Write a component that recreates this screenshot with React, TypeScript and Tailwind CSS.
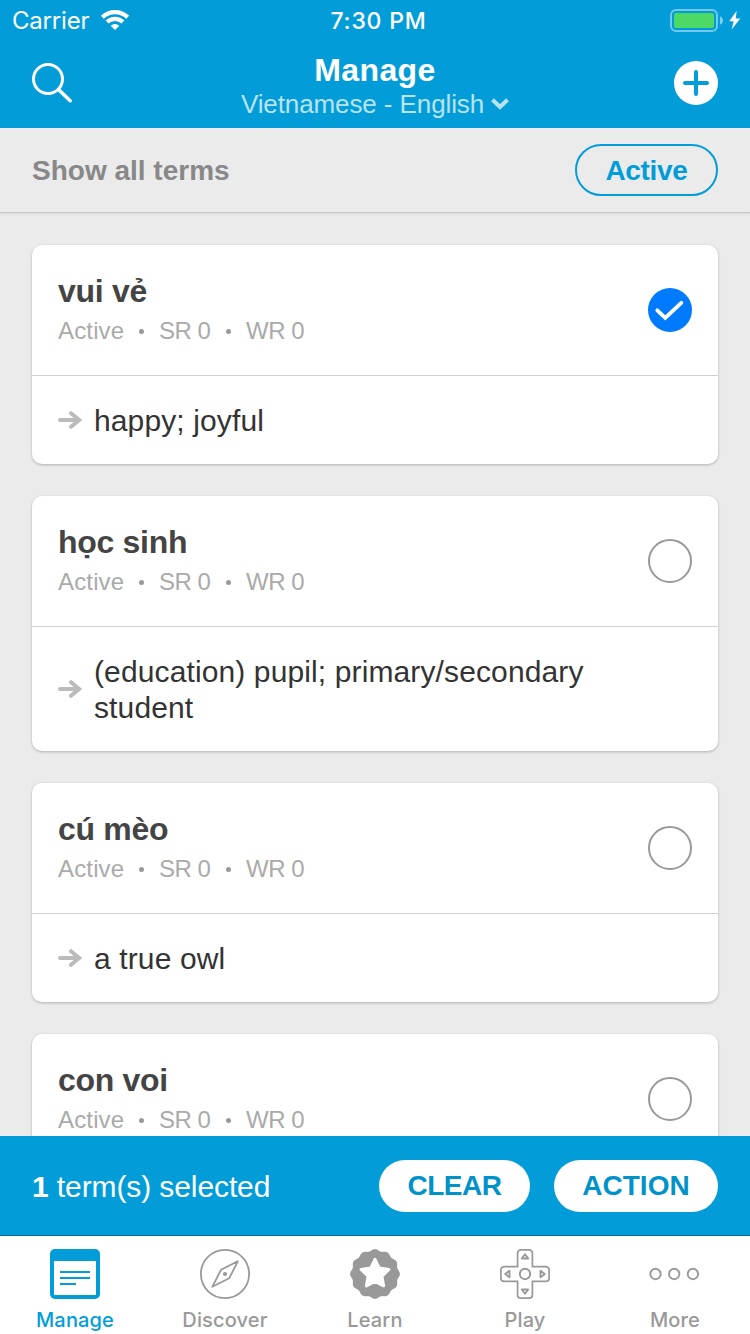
import React from "react";

type Term = { term: string; meaning?: string; selected?: boolean };

const TERMS: Term[] = [
  { term: "vui vẻ", meaning: "happy; joyful", selected: true },
  { term: "học sinh", meaning: "(education) pupil; primary/secondary student" },
  { term: "cú mèo", meaning: "a true owl" },
  { term: "con voi" },
];

function polar(count: number, radius: (i: number) => number): string {
  return Array.from({ length: count }, (_, i) => {
    const a = (i / count) * Math.PI * 2 - Math.PI / 2;
    const r = radius(i);
    return `${(25 + r * Math.cos(a)).toFixed(2)},${(25 + r * Math.sin(a)).toFixed(2)}`;
  }).join(" ");
}

const BADGE = polar(240, (i) => 24 + 0.9 * Math.cos((i / 240) * Math.PI * 24));
const STAR = polar(10, (i) => (i % 2 ? 7.3 : 14.6));

function StatusBar() {
  return (
    <div className="flex h-10 items-center justify-between pl-3 pr-2 font-['Inter',sans-serif] text-white">
      <div className="flex w-[240px] items-center">
        <span className="w-[88px] whitespace-nowrap pt-[2px] text-[24px] leading-[38px] tracking-[-0.2px]">Carrier</span>
        <svg className="h-[22px] w-[30px]" viewBox="0 0 30 22" fill="none" stroke="white" strokeWidth="4.2">
          <path d="M2.34 8.34a17.9 17.9 0 0 1 25.32 0M7.08 13.08a11.2 11.2 0 0 1 15.84 0" />
          <path d="M15 21l-4.3-4.3a6.1 6.1 0 0 1 8.6 0z" fill="white" stroke="none" />
        </svg>
      </div>
      <span className="whitespace-nowrap pl-[3px] pt-[2px] text-[23px] font-medium leading-[38px] tracking-[0.8px]">7:30 PM</span>
      <div className="flex w-[240px] justify-end">
        <svg className="h-6 w-[72px]" viewBox="0 0 72 24">
          <rect x="1" y="2" width="46" height="21" rx="5" fill="none" stroke="white" strokeOpacity="0.45" strokeWidth="2" />
          <rect x="4" y="5" width="40" height="15" rx="2" fill="#4cd964" />
          <path d="M50 8.5c4 1 4 7 0 8z" fill="white" fillOpacity="0.5" />
          <path d="M66.700 2.700L59.200 13.200h4.400l-1.900 8.300L70.200 10.500h-4.500z" fill="white" />
        </svg>
      </div>
    </div>
  );
}

function Header() {
  return (
    <header className="h-32 shrink-0 bg-[#029dd9] text-white">
      <StatusBar />
      <div className="flex h-[88px] items-center justify-between px-8 pb-[2px]">
        <svg className="h-11 w-11" viewBox="0 0 44 44" fill="none" stroke="white" strokeWidth="3">
          <circle cx="16" cy="18" r="14.500" />
          <path d="M26.500 28.500L38.200 39.700" strokeWidth="3.500" strokeLinecap="round" />
        </svg>
        <div className="flex flex-col items-center">
          <h1 className="pt-[6px] text-[32px] font-bold leading-[36px] tracking-[0.4px]">Manage</h1>
          <div className="flex items-center gap-[7px] text-[#b8e3ef]">
            <span className="text-[26px] leading-[32px] tracking-[-0.1px]">Vietnamese - English</span>
            <svg className="h-3 w-[18px]" viewBox="0 0 18 12" fill="none" stroke="currentColor" strokeWidth="4">
              <path d="M1.500 1.800L9 9l7.500-7.200" />
            </svg>
          </div>
        </div>
        <svg className="h-11 w-11" viewBox="0 0 44 44">
          <circle cx="22" cy="22" r="22" fill="white" />
          <path d="M22 11v22M11 22h22" stroke="#029dd9" strokeWidth="4" strokeLinecap="round" />
        </svg>
      </div>
    </header>
  );
}

function TermCard({ term, meaning, selected }: Term) {
  return (
    <article className="shrink-0 rounded-[10px] bg-white shadow-[0_1px_3px_rgba(0,0,0,0.25)]">
      <div className="flex h-[131px] items-center justify-between border-b border-[#d0d0d0] px-[26px]">
        <div className="pt-[2px]">
          <h2 className="text-[32px] font-bold leading-10 tracking-[-0.3px] text-[#444]">{term}</h2>
          <div className="flex whitespace-nowrap text-[24px] leading-10 text-[#aaa]">
            <span className="w-[67px] tracking-[0.15px]">Active</span>
            <Dot />
            <span className="w-[53px] tracking-[-0.5px]">SR 0</span>
            <Dot />
            <span className="tracking-[-0.5px]">WR 0</span>
          </div>
        </div>
        <svg className="h-11 w-11" viewBox="0 0 44 44" fill="none">
          {selected ? (
            <>
              <circle cx="22" cy="22" r="22" fill="#007aff" />
              <path d="M9.300 22.300l8 7.600L33.300 14.800" stroke="white" strokeWidth="3.800" strokeLinecap="round" />
            </>
          ) : (
            <circle cx="22" cy="22" r="21" stroke="#999" strokeWidth="2" />
          )}
        </svg>
      </div>
      {meaning && (
        <div className="flex items-center gap-3 px-[26px] py-[26px]">
          <svg className="h-5 w-6 shrink-0" viewBox="0 0 24 20" fill="none" stroke="#bbb" strokeWidth="4" strokeLinecap="round">
            <path d="M2 10h18M13 3.200L21.300 10 13 16.800" />
          </svg>
          <p className="-mb-px w-[530px] pt-px text-[30px] leading-9 tracking-[0.12px] text-[#333]">{meaning}</p>
        </div>
      )}
    </article>
  );
}

function Dot() {
  return (
    <span className="flex w-[34px] items-center justify-center pr-px">
      <span className="h-[5px] w-[5px] rounded-full bg-[#999]" />
    </span>
  );
}

function Tab({ label, active, children }: { label: string; active?: boolean; children: React.ReactNode }) {
  return (
    <div className={active ? "flex flex-1 flex-col items-center text-[#029dd9]" : "flex flex-1 flex-col items-center text-[#999]"}>
      <svg className="h-[50px] w-[50px] overflow-visible" viewBox="0 0 50 50" fill="none" stroke="currentColor">
        {children}
      </svg>
      <span className="mt-[9px] font-['Inter',sans-serif] text-[20px] font-medium leading-6 tracking-[0.15px]">{label}</span>
    </div>
  );
}

export default function App() {
  return (
    <div className="flex h-[1334px] w-[750px] flex-col overflow-hidden bg-[#ebebeb] font-['Liberation_Sans',Arial,sans-serif]">
      <Header />
      <div className="flex h-[85px] shrink-0 items-center justify-between border-b border-[#c8c8c8] px-8 shadow-[0_1px_2px_rgba(0,0,0,0.08)]">
        <span className="pt-[2px] text-[28px] font-bold leading-8 text-[#888]">Show all terms</span>
        <button className="h-[52px] w-[143px] rounded-full border-2 border-[#029dd9] pt-px text-[28px] font-bold tracking-[-0.3px] text-[#029dd9]">Active</button>
      </div>
      <main className="flex min-h-0 flex-1 flex-col gap-8 overflow-hidden px-8 pt-8">
        {TERMS.map((t) => (
          <TermCard key={t.term} {...t} />
        ))}
      </main>
      <div className="flex h-[99px] shrink-0 items-center gap-6 bg-[#029dd9] px-8 pt-px">
        <p className="flex-1 pt-[2px] text-[30px] leading-9 tracking-[-0.1px] text-white">
          <b>1</b> term(s) selected
        </p>
        <button className="h-[52px] w-[151px] rounded-full bg-white text-[28px] font-bold tracking-[-0.5px] text-[#0092c8]">CLEAR</button>
        <button className="h-[52px] w-[164px] rounded-full bg-white text-[28px] font-bold text-[#0092c8]">ACTION</button>
      </div>
      <nav className="flex h-[99px] shrink-0 border-t border-[#006c95] bg-white pt-[13px]">
        <Tab label="Manage" active>
          <rect width="50" height="50" rx="5" fill="currentColor" stroke="none" />
          <path d="M4 12h42v34H4z" fill="white" stroke="none" />
          <path d="M10 23h30M10 29h30M10 35h16" strokeWidth="2" />
        </Tab>
        <Tab label="Discover">
          <circle cx="25" cy="25" r="24.100" strokeWidth="1.800" />
          <path d="M37.800 12.300L21 20.800 12.300 37.800 29.200 29.300z" strokeWidth="1.800" strokeLinejoin="round" />
          <circle cx="25" cy="25" r="2.100" fill="currentColor" stroke="none" />
        </Tab>
        <Tab label="Learn">
          <polygon points={BADGE} fill="currentColor" stroke="none" />
          <polygon points={STAR} fill="white" stroke="white" strokeWidth="3" strokeLinejoin="round" />
        </Tab>
        <Tab label="Play">
          <path
            d="M20.800 .9h8.400a3.200 3.200 0 0 1 3.200 3.200V17.600H45.900a3.200 3.200 0 0 1 3.200 3.200v8.400a3.200 3.200 0 0 1-3.200 3.200H32.400V45.900a3.200 3.200 0 0 1-3.200 3.200h-8.400a3.200 3.200 0 0 1-3.200-3.200V32.400H4.100a3.200 3.200 0 0 1-3.200-3.200v-8.400a3.200 3.200 0 0 1 3.200-3.200H17.600V4.100A3.200 3.200 0 0 1 20.800 .9z"
            strokeWidth="1.700"
          />
          <circle cx="25" cy="25" r="5.200" strokeWidth="1.900" />
          <path d="M25 5.200l3.200 4.300h-6.400zM25 44.800l3.200-4.300h-6.400zM5.200 25l4.300-3.200v6.400zM44.800 25l-4.300-3.200v6.400z" strokeWidth="1.900" strokeLinejoin="round" />
        </Tab>
        <Tab label="More">
          <circle cx="5.500" cy="25" r="5.200" strokeWidth="1.900" />
          <circle cx="24.200" cy="25" r="5.200" strokeWidth="1.900" />
          <circle cx="42.900" cy="25" r="5.200" strokeWidth="1.900" />
        </Tab>
      </nav>
    </div>
  );
}
